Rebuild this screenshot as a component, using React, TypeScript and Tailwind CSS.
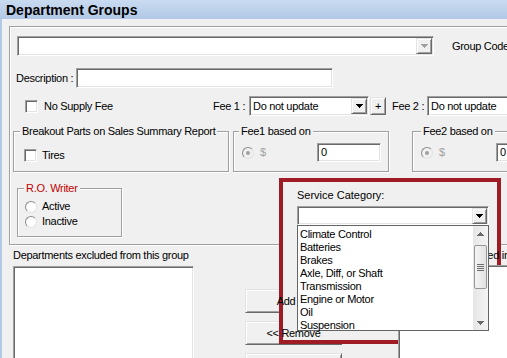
import React from "react";

const sunken =
  "border border-t-[#a0a0a0] border-l-[#a0a0a0] border-r-white border-b-white shadow-[inset_1px_1px_0_#696969,inset_-1px_-1px_0_#e3e3e3] bg-white";
const raised =
  "border border-t-[#e3e3e3] border-l-[#e3e3e3] border-r-[#696969] border-b-[#696969] shadow-[inset_1px_1px_0_#fff,inset_-1px_-1px_0_#a0a0a0] bg-[#f0f0f0]";
const etched = "border border-[#a0a0a0] shadow-[inset_1px_1px_0_#fff,1px_1px_0_#fff]";

function Down({ color = "#000" }: { color?: string }) {
  return (
    <svg width="7" height="4" viewBox="0 0 7 4" shapeRendering="crispEdges">
      <path d="M0 0h7v1H0z M1 1h5v1H1z M2 2h3v1H2z M3 3h1v1H3z" fill={color} />
    </svg>
  );
}
function Up({ color = "#000" }: { color?: string }) {
  return (
    <svg width="7" height="4" viewBox="0 0 7 4" shapeRendering="crispEdges">
      <path d="M3 0h1v1H3z M2 1h3v1H2z M1 2h5v1H1z M0 3h7v1H0z" fill={color} />
    </svg>
  );
}

function Check() {
  return <div className={`w-[13px] h-[13px] shrink-0 ${sunken}`} />;
}

function Radio({ disabled = false }: { disabled?: boolean }) {
  return (
    <div
      className={`w-[12px] h-[12px] shrink-0 rounded-full border border-t-[#8a8a8a] border-l-[#8a8a8a] border-r-[#e3e3e3] border-b-[#e3e3e3] flex items-center justify-center ${
        disabled ? "bg-[#f0f0f0]" : "bg-white"
      }`}
    >
      {disabled && <div className="w-[4px] h-[4px] rounded-full bg-[#a0a0a0]" />}
    </div>
  );
}

function Legend({ children, className = "" }: { children: React.ReactNode; className?: string }) {
  return (
    <span className={`-mt-[7px] self-start px-[2px] bg-[#f0f0f0] leading-[13px] whitespace-nowrap ${className}`}>
      {children}
    </span>
  );
}

function Select({ text }: { text: string }) {
  return (
    <div className={`w-[120px] h-[20px] shrink-0 ${sunken} flex items-center justify-between pl-[3px] pr-[1px]`}>
      <span className="whitespace-nowrap">{text}</span>
      <div className={`w-[16px] h-[16px] ${raised} flex items-center justify-center`}>
        <Down />
      </div>
    </div>
  );
}

function FeeGroup({ label, ml, w, legendMl }: { label: string; ml: string; w: string; legendMl: string }) {
  return (
    <div className={`${ml} ${w} h-[41px] shrink-0 ${etched} flex flex-col`}>
      <Legend className={legendMl}>{label}</Legend>
      <div className="flex items-center mt-[5px] ml-[8px]">
        <Radio disabled />
        <span className="ml-[6px] w-[57px] text-[#a0a0a0]">$</span>
        <div className={`w-[64px] h-[19px] shrink-0 ${sunken} flex items-center pl-[3px]`}>0</div>
      </div>
    </div>
  );
}

export default function App() {
  const items = [
    "Climate Control",
    "Batteries",
    "Brakes",
    "Axle, Diff, or Shaft",
    "Transmission",
    "Engine or Motor",
    "Oil",
    "Suspension",
  ];
  return (
    <div className="w-[507px] h-[358px] overflow-hidden relative bg-[#f0f0f0] flex flex-col font-['Liberation_Sans',Arial,sans-serif] text-[11px] leading-[13px] tracking-[-0.3px] text-black">
      <div className="h-[19px] shrink-0 bg-[linear-gradient(#c9dbf0,#b1c8e6)] pl-[6px] text-[14px] font-bold leading-[20px] tracking-normal whitespace-nowrap">
        Department Groups
      </div>
      <div className="flex flex-1 min-h-0">
        <div className="w-[2px] shrink-0 bg-[#b3cae7]" />
        <div className="flex-1 min-w-0 flex flex-col">
          <div className={`mt-[7px] ml-[7px] w-[520px] h-[219px] shrink-0 ${etched} flex flex-col`}>
            {/* row 1 */}
            <div className="flex items-center mt-[9px] ml-[7px] h-[20px]">
              <div className={`w-[417px] h-[20px] shrink-0 ${sunken} flex justify-end items-center pr-[1px]`}>
                <div className={`w-[16px] h-[16px] ${raised} flex items-center justify-center`}>
                  <Down color="#a0a0a0" />
                </div>
              </div>
              <span className="ml-[18px] whitespace-nowrap">Group Code</span>
            </div>
            {/* row 2 */}
            <div className="flex items-center mt-[12px] ml-[6px] h-[20px]">
              <span className="w-[60px] shrink-0 whitespace-nowrap">Description :</span>
              <div className={`w-[257px] h-[20px] shrink-0 ${sunken}`} />
            </div>
            {/* row 3 */}
            <div className="flex items-center mt-[8px] h-[20px]">
              <div className="w-[203px] shrink-0 flex items-center">
                <div className="ml-[15px]">
                  <Check />
                </div>
                <span className="ml-[6px] whitespace-nowrap">No Supply Fee</span>
              </div>
              <span className="w-[36px] shrink-0 whitespace-nowrap">Fee 1 :</span>
              <Select text="Do not update" />
              <div className={`ml-[1px] w-[16px] h-[18px] shrink-0 ${raised} flex items-center justify-center leading-none`}>
                +
              </div>
              <span className="ml-[6px] w-[35px] shrink-0 whitespace-nowrap">Fee 2 :</span>
              <Select text="Do not update" />
            </div>
            {/* row 4 */}
            <div className="flex items-start mt-[15px]">
              <div className={`ml-[3px] w-[216px] h-[41px] shrink-0 ${etched} flex flex-col`}>
                <Legend className="ml-[6px]">Breakout Parts on Sales Summary Report</Legend>
                <div className="flex items-center mt-[11px] ml-[10px]">
                  <Check />
                  <span className="ml-[5px]">Tires</span>
                </div>
              </div>
              <FeeGroup label="Fee1 based on" ml="ml-[4px]" w="w-[156px]" legendMl="ml-[5px]" />
              <FeeGroup label="Fee2 based on" ml="ml-[23px]" w="w-[150px]" legendMl="ml-[8px]" />
            </div>
            {/* row 5 */}
            <div className={`mt-[16px] ml-[7px] w-[105px] h-[49px] shrink-0 ${etched} flex flex-col`}>
              <Legend className="ml-[6px] text-[#c00000]">R.O. Writer</Legend>
              <div className="mt-[4px] flex flex-col">
                <div className="h-[15px] flex items-center ml-[7px]">
                  <Radio />
                  <span className="ml-[5px]">Active</span>
                </div>
                <div className="h-[15px] flex items-center ml-[7px]">
                  <Radio />
                  <span className="ml-[5px]">Inactive</span>
                </div>
              </div>
            </div>
          </div>
          {/* bottom area */}
          <div className="flex items-start mt-[4px] ml-[11px]">
            <div className="w-[181px] shrink-0 flex flex-col">
              <span className="whitespace-nowrap">Departments excluded from this group</span>
              <div className={`mt-[4px] h-[100px] ${sunken}`} />
            </div>
            <div className="ml-[51px] mt-[40px] w-[97px] shrink-0 flex flex-col gap-[8px]">
              <div className={`h-[24px] ${raised} flex items-center justify-center whitespace-nowrap`}>
                <span className="relative z-[1]">Add &gt;&gt;</span>
              </div>
              <div className={`h-[24px] ${raised} flex items-center justify-center whitespace-nowrap`}>
                <span className="relative z-[1]">&lt;&lt; Remove</span>
              </div>
              <div className={`h-[24px] ${raised} flex items-center justify-center whitespace-nowrap`}></div>
            </div>
            <div className="ml-[56px] w-[200px] shrink-0 flex flex-col relative z-[1]">
              <span className="whitespace-nowrap">Departments included in this group</span>
              <div className={`mt-[3px] h-[100px] ${sunken}`} />
            </div>
          </div>
        </div>
      </div>

      {/* Service Category popup overlay */}
      <div className="absolute left-[279px] top-[178px] w-[222px] h-[166px] border-4 border-[#a01c24] bg-[#f0f0f0] flex flex-col">
        <span className="mt-[7px] ml-[14px] tracking-normal whitespace-nowrap">Service Category:</span>
        <div className={`relative z-[2] mt-[4px] ml-[14px] w-[192px] h-[19px] shrink-0 ${sunken} flex justify-end items-center pr-[1px]`}>
          <div className={`w-[15px] h-[16px] ${raised} flex items-center justify-center`}>
            <Down />
          </div>
        </div>
        <div className="relative z-[2] ml-[14px] w-[192px] h-[106px] shrink-0 border border-[#646464] bg-white flex">
          <div className="flex-1 pt-[2px] pl-[2px] flex flex-col">
            {items.map((it) => (
              <div key={it} className="h-[13px] leading-[13px] whitespace-nowrap">
                {it}
              </div>
            ))}
          </div>
          <div className="w-[15px] shrink-0 bg-[linear-gradient(to_right,#e6e6e6,#f4f4f4)] flex flex-col">
            <div className="h-[15px] flex items-center justify-center">
              <Up color="#6a6a6a" />
            </div>
            <div className="mt-[4px] mx-[1px] h-[44px] rounded-[2px] border border-[#979797] bg-[linear-gradient(to_right,#f4f4f4,#e2e2e2)] flex flex-col items-center justify-center gap-[1px]">
              <div className="w-[7px] h-[1px] bg-[#6e6e6e]" />
              <div className="w-[7px] h-[1px] bg-[#6e6e6e]" />
              <div className="w-[7px] h-[1px] bg-[#6e6e6e]" />
              <div className="w-[7px] h-[1px] bg-[#6e6e6e]" />
            </div>
            <div className="mt-auto h-[15px] flex items-center justify-center">
              <Down color="#6a6a6a" />
            </div>
          </div>
        </div>
      </div>
    </div>
  );
}
